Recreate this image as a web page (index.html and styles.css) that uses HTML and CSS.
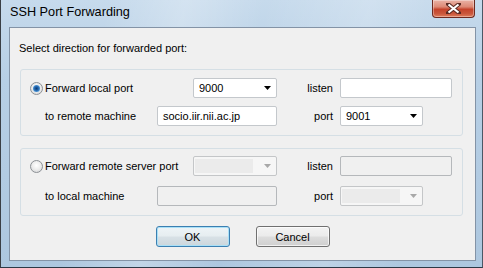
FILE: index.html
```html
<!DOCTYPE html>
<html>
<head>
<meta charset="utf-8">
<link rel="stylesheet" href="styles.css">
</head>
<body>
<div class="window">
  <div class="titlebar">
    <span class="title">SSH Port Forwarding</span>
    <div class="close">
      <svg width="15" height="11" viewBox="0 0 15 11"><path d="M2 1 L13 10 M13 1 L2 10" stroke="#5a2a22" stroke-width="4" stroke-linecap="square"/><path d="M2.5 1.5 L12.5 9.5 M12.5 1.5 L2.5 9.5" stroke="#ffffff" stroke-width="2.2"/></svg>
    </div>
  </div>
  <div class="client">
    <p class="intro">Select direction for forwarded port:</p>
    <div class="group">
      <div class="grid">
        <label class="lbl span2"><span class="radio checked"></span>Forward local port</label>
        <div class="combo"><span class="val">9000</span><svg class="arrow" width="7" height="4" viewBox="0 0 7 4"><path d="M0 0 H7 L3.5 4 Z" fill="#000"/></svg></div>
        <span class="side">listen</span>
        <div class="field"></div>
        <span class="lbl indent">to remote machine</span>
        <div class="field span2"><span class="val">socio.iir.nii.ac.jp</span></div>
        <span class="side">port</span>
        <div class="combo short"><span class="val">9001</span><svg class="arrow" width="7" height="4" viewBox="0 0 7 4"><path d="M0 0 H7 L3.5 4 Z" fill="#000"/></svg></div>
      </div>
    </div>
    <div class="group second">
      <div class="grid loose">
        <label class="lbl span2"><span class="radio"></span>Forward remote server port</label>
        <div class="combo disabled"><span class="inner"></span><svg class="arrow" width="7" height="4" viewBox="0 0 7 4"><path d="M0 0 H7 L3.5 4 Z" fill="#a8a8a8"/></svg></div>
        <span class="side">listen</span>
        <div class="field disabled"></div>
        <span class="lbl indent">to local machine</span>
        <div class="field disabled span2"></div>
        <span class="side">port</span>
        <div class="combo short disabled"><span class="inner"></span><svg class="arrow" width="7" height="4" viewBox="0 0 7 4"><path d="M0 0 H7 L3.5 4 Z" fill="#a8a8a8"/></svg></div>
      </div>
    </div>
    <div class="buttons">
      <button class="btn default">OK</button>
      <button class="btn">Cancel</button>
    </div>
  </div>
</div>
</body>
</html>
```
FILE: styles.css
```css
html, body {
  margin: 0;
  padding: 0;
  background: #9fb6cc;
}
body {
  font-family: "Liberation Sans", Arial, sans-serif;
  font-size: 11px;
  color: #000;
}
.window {
  width: 483px;
  height: 268px;
  box-sizing: border-box;
  display: flex;
  flex-direction: column;
  background:
    linear-gradient(100deg, rgba(255,255,255,0) 20%, rgba(255,255,255,0.25) 35%, rgba(255,255,255,0) 50%, rgba(255,255,255,0.2) 70%, rgba(255,255,255,0) 85%),
    linear-gradient(180deg, #c6daec 0%, #b7cfe5 30%, #adc7df 100%);
  border-left: 1px solid #3a3f45;
  border-right: 1px solid #4b5866;
  border-bottom: 1px solid #2c3946;
}
.titlebar {
  height: 27px;
  flex: none;
  display: flex;
  justify-content: space-between;
  align-items: flex-start;
  padding: 0 7px 0 9px;
}
.title {
  font-size: 12.7px;
  line-height: 15px;
  margin-top: 5px;
  color: #000;
}
.close {
  width: 43px;
  height: 18px;
  box-sizing: border-box;
  border: 1px solid #6e2a20;
  border-top: none;
  border-radius: 0 0 4px 4px;
  background: linear-gradient(180deg, #eab3a6 0%, #dd8a76 40%, #c5432b 55%, #c9573c 80%, #e07d5c 100%);
  box-shadow: inset 0 0 0 1px rgba(255,255,255,0.35);
  display: flex;
  align-items: center;
  justify-content: center;
}
.client {
  height: 234px;
  box-sizing: border-box;
  margin: 0 6px 0 8px;
  border: 1px solid #8393a6;
  background: #f0f0f0;
  display: flex;
  flex-direction: column;
}
.intro {
  margin: 14px 0 0 9px;
  line-height: 13px;
}
.group {
  margin: 14px 12px 0 10px;
  border: 1px solid #d5dfe5;
  border-radius: 3px;
  padding: 8px 0 9px 9px;
}
.group.second {
  margin-top: 12px;
  padding-top: 7px;
}
.grid {
  display: grid;
  grid-template-columns: 127px 36px 84px 63px 112px;
  grid-template-rows: 20px 20px;
  row-gap: 8px;
  align-items: center;
}
.grid.loose {
  row-gap: 10px;
}
.span2 {
  grid-column: span 2;
}
.lbl {
  display: flex;
  align-items: center;
  gap: 2px;
  white-space: nowrap;
}
.indent {
  padding-left: 15px;
}
.side {
  text-align: right;
  padding-right: 7px;
}
.radio {
  width: 13px;
  height: 13px;
  box-sizing: border-box;
  border-radius: 50%;
  border: 1px solid #8c9095;
  background: radial-gradient(circle at 50% 40%, #ffffff 0%, #eeeeee 45%, #cfd1d3 100%);
  position: relative;
  flex: none;
}
.radio.checked::after {
  content: "";
  position: absolute;
  left: 2px;
  top: 2px;
  width: 7px;
  height: 7px;
  border-radius: 50%;
  background: radial-gradient(circle at 50% 50%, #0d3c72 0%, #1f5fa6 35%, #4d98d8 70%, #9cd0f3 100%);
}
.field, .combo {
  height: 20px;
  box-sizing: border-box;
  border: 1px solid #c4c8cc;
  border-radius: 2px;
  background: #fff;
  display: flex;
  align-items: center;
  padding: 0 5px;
  white-space: nowrap;
}
.combo {
  justify-content: space-between;
}
.combo.short {
  width: 83px;
}
.field.disabled {
  background: #f0f0f0;
  border-color: #b5b8bb;
}
.combo.disabled {
  background: #f6f6f6;
  border-color: #c4c6c8;
  padding: 2px 5px 2px 1px;
}
.combo.disabled .inner {
  align-self: stretch;
  width: 58px;
  background: #ebebeb;
}
.buttons {
  display: flex;
  justify-content: center;
  gap: 26px;
  margin-top: 10px;
}
.btn {
  width: 74px;
  height: 21px;
  box-sizing: border-box;
  border: 1px solid #707070;
  border-radius: 3px;
  background: linear-gradient(180deg, #f3f3f3 0%, #ebebeb 48%, #dddddd 52%, #cfcfcf 100%);
  box-shadow: inset 0 0 0 1px rgba(255,255,255,0.7);
  font-family: "Liberation Sans", Arial, sans-serif;
  font-size: 11px;
  color: #000;
  padding: 0;
}
.btn.default {
  border-color: #3c7fb1;
  box-shadow: inset 0 0 0 1px #a9e0f7;
  background: linear-gradient(180deg, #eef4f7 0%, #e6edf0 48%, #d8e1e6 52%, #ccd6dc 100%);
}
```
